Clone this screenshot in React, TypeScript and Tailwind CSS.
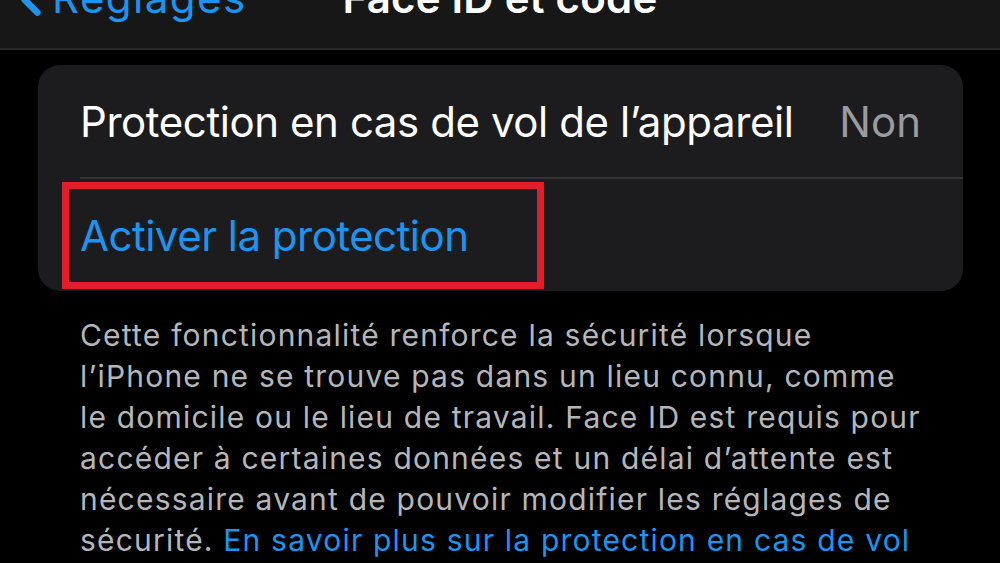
import { ChevronLeft } from 'lucide-react'

export default function App() {
  return (
    <div className="w-[1000px] h-[563px] overflow-hidden bg-black font-['Inter','Noto_Sans',sans-serif]">
      <div className="h-[50px] bg-[#171717] border-b-2 border-[#2a2a2a] overflow-hidden">
        <div className="grid grid-cols-[1fr_auto_1fr] items-end h-[50px] -mt-[27px]">
          <div className="flex items-end pl-[6px]">
            <ChevronLeft className="w-[50px] h-[50px] text-[#1b95f0] -mb-[2px]" strokeWidth={3.2} />
            <span className="text-[42px] leading-[50px] text-[#1b95f0] -ml-[4px] tracking-[0.035em]">Réglages</span>
          </div>
          <span className="text-[42px] leading-[50px] font-semibold text-white tracking-[0.005em]">Face ID et code</span>
          <div />
        </div>
      </div>

      <div className="relative mt-[15px] ml-[38px] mr-[37px] rounded-[22px] bg-[#1c1c1e]">
        <div className="flex items-center justify-between h-[112px] pl-[42px] pr-[42px]">
          <span className="text-[42px] text-white tracking-[-0.01em]">Protection en cas de vol de l’appareil</span>
          <span className="text-[42px] text-[#9a9a9f]">Non</span>
        </div>
        <div className="ml-[42px] h-[2px] bg-[#343436]" />
        <div className="flex items-center h-[112px] pl-[42px]">
          <span className="text-[42px] text-[#1b95f0] tracking-[-0.012em]">Activer la protection</span>
        </div>
        <div className="absolute left-[24px] top-[117px] w-[482px] h-[107px] border-[7px] border-[#e31e2a]" />
      </div>

      <p className="mt-[24px] pl-[80px] pr-[20px] text-[30px] leading-[41px] text-[#b6b6ba] tracking-[0.04em] whitespace-nowrap">
        Cette fonctionnalité renforce la sécurité lorsque<br />
        l’iPhone ne se trouve pas dans un lieu connu, comme<br />
        le domicile ou le lieu de travail. Face ID est requis pour<br />
        accéder à certaines données et un délai d’attente est<br />
        nécessaire avant de pouvoir modifier les réglages de<br />
        sécurité.{' '}
        <span className="text-[#1b95f0]">En savoir plus sur la protection en cas de vol</span>
      </p>
    </div>
  )
}
